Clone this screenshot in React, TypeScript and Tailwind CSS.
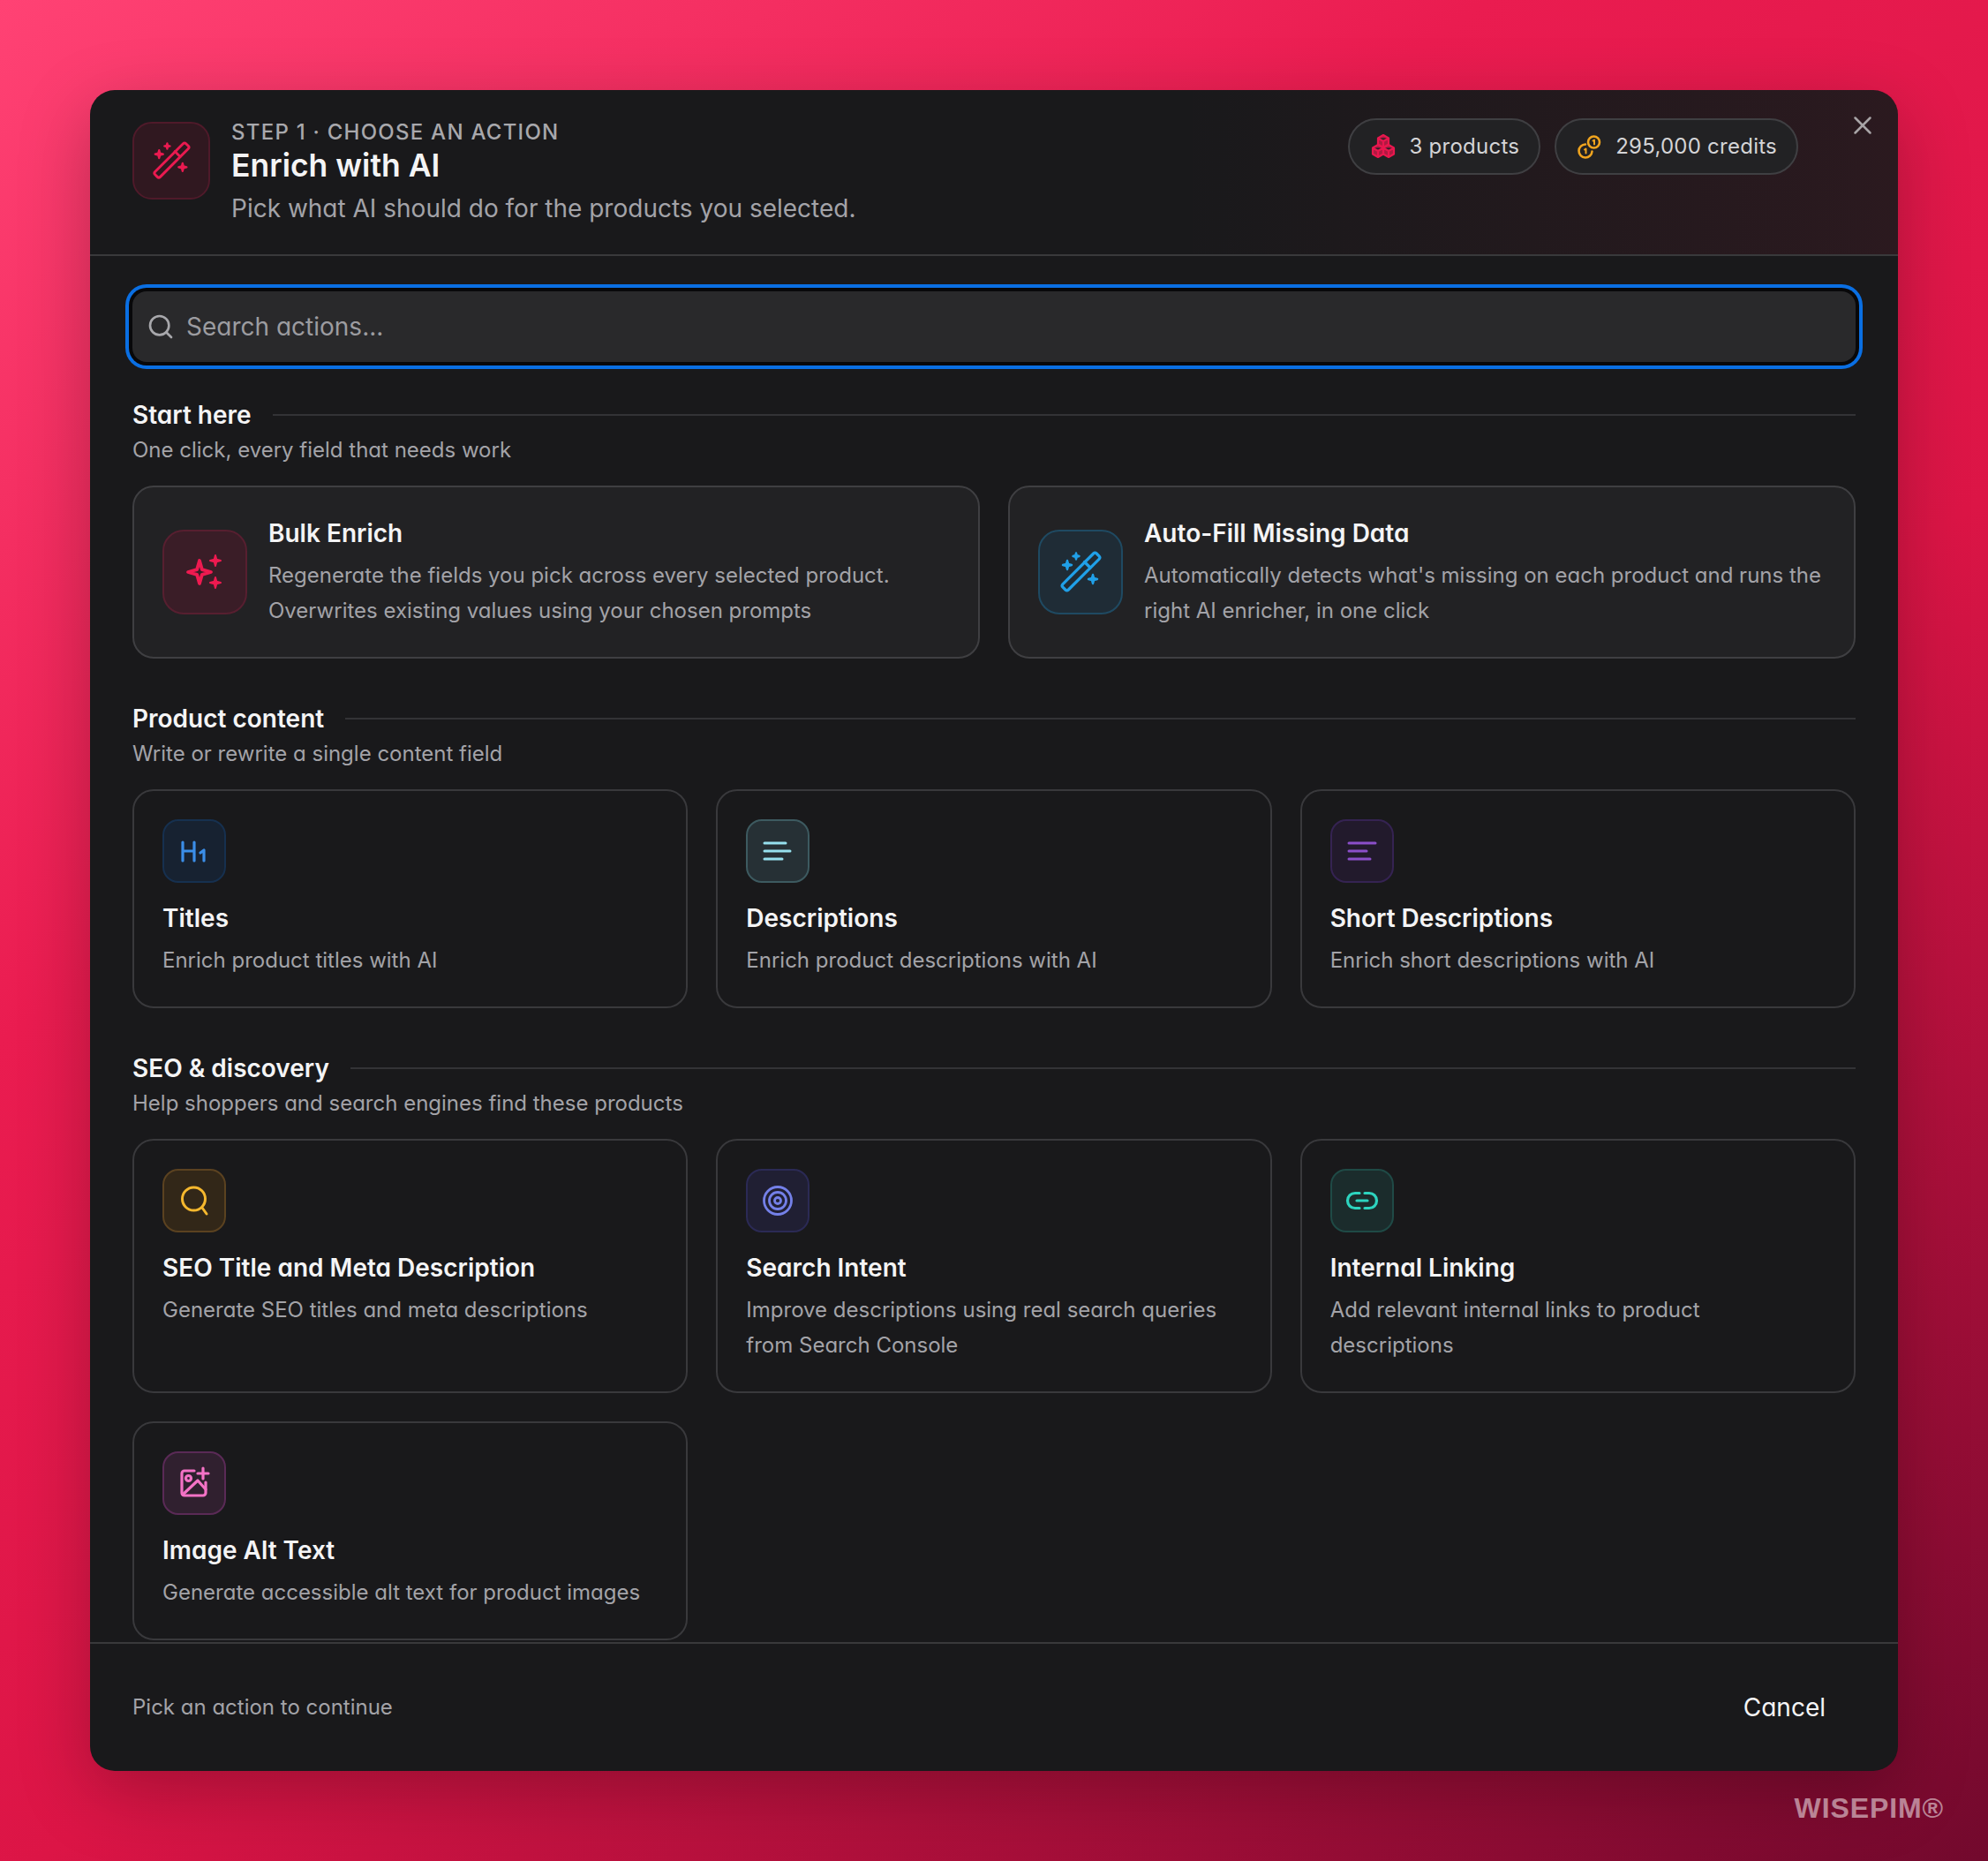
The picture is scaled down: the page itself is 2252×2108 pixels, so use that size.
import { Search, X } from "lucide-react";
import type { ReactNode } from "react";

function Svg({ size = 48, view = 48, className = "", children }: { size?: number; view?: number; className?: string; children: ReactNode }) {
  return (
    <svg width={size} height={size} viewBox={`0 0 ${view} ${view}`} fill="none" stroke="currentColor" strokeLinecap="round" strokeLinejoin="round" className={className}>
      {children}
    </svg>
  );
}

// four point star, used by the wand and sparkle icons
function star(x: number, y: number, r: number) {
  const k = r * 0.22;
  return `M${x} ${y - r}L${x + k} ${y - k}L${x + r} ${y}L${x + k} ${y + k}L${x} ${y + r}L${x - k} ${y + k}L${x - r} ${y}L${x - k} ${y - k}Z`;
}

function WandIcon({ size = 48 }: { size?: number }) {
  return (
    <Svg size={size}>
      <g strokeWidth="3.2">
        <rect x="-4.5" y="-27" width="9" height="54" rx="2.5" transform="translate(24.5 23.5) rotate(45)" />
        <path d="M28.5 12.5l6.5 6.5" />
      </g>
      <g fill="currentColor" strokeWidth="2.4">
        <path d={star(9, 16, 5)} />
        <path d={star(19, 6, 3.5)} />
        <path d={star(38, 32, 5)} />
      </g>
    </Svg>
  );
}

function SparkleIcon() {
  return (
    <Svg>
      <path d={star(18, 24, 13)} strokeWidth="3.8" />
      <g fill="currentColor" strokeWidth="2">
        <path d={star(36, 11, 6)} />
        <path d={star(36, 36, 6)} />
      </g>
    </Svg>
  );
}

function H1Icon() {
  return (
    <Svg>
      <g strokeWidth="3.2">
        <path d="M11 14v21M24 14v21M11 24h13" />
        <path d="M31 26l4-3v12" />
      </g>
    </Svg>
  );
}

function LinesIcon({ lines }: { lines: number[] }) {
  return (
    <Svg>
      <g strokeWidth="3">
        {lines.map((end, i) => (
          <path key={i} d={`M9 ${15 + i * 9}H${end}`} />
        ))}
      </g>
    </Svg>
  );
}

function LensIcon() {
  return (
    <Svg>
      <g strokeWidth="3">
        <circle cx="23.5" cy="22" r="13" />
        <path d="M33 32l5 7" />
      </g>
    </Svg>
  );
}

function TargetIcon() {
  return (
    <Svg>
      <g strokeWidth="2.8">
        <circle cx="24" cy="24" r="15.5" />
        <circle cx="24" cy="24" r="9.5" />
        <circle cx="24" cy="24" r="3.5" />
      </g>
    </Svg>
  );
}

function LinkIcon() {
  return (
    <Svg>
      <g strokeWidth="3.2">
        <path d="M21 15.5h-5a8.5 8.5 0 0 0 0 17h5" />
        <path d="M27 15.5h5a8.5 8.5 0 0 1 0 17h-5" />
        <path d="M18 24h12" />
      </g>
    </Svg>
  );
}

function ImageAddIcon() {
  return (
    <Svg>
      <g strokeWidth="3.2">
        <path d="M24 10H13a3 3 0 0 0-3 3v22a3 3 0 0 0 3 3h21a3 3 0 0 0 3-3V23" />
        <circle cx="17.5" cy="18.5" r="3" />
        <path d="M11 37l17-16 9 10" />
        <path d="M34 7v12M28 13h12" />
      </g>
    </Svg>
  );
}

function CubesIcon() {
  const cube = (x: number, y: number) =>
    `M${x} ${y - 7}l6 3.5v7l-6 3.5l-6-3.5v-7ZM${x - 6} ${y - 3.5}l6 3.5l6-3.5M${x} ${y}v7`;
  return (
    <Svg size={28} view={28} className="shrink-0">
      <g strokeWidth="2.2" fill="currentColor" fillOpacity="0.7">
        <path d={cube(14, 8)} />
        <path d={cube(8, 19)} />
        <path d={cube(20, 19)} />
      </g>
    </Svg>
  );
}

function CoinsIcon() {
  return (
    <Svg size={28} view={28} className="shrink-0">
      <g strokeWidth="2.6">
        <circle cx="18.5" cy="9" r="6.5" />
        <path d="M9 11.5a7.5 7.5 0 1 0 7.5 8" />
        <path d="M17.5 7.5l1.5-1v5" strokeWidth="2" />
        <path d="M8 17.5l1.5-1v5" strokeWidth="2" />
      </g>
    </Svg>
  );
}

function IconBox({ className, children }: { className: string; children: ReactNode }) {
  return <div className={`flex shrink-0 items-center justify-center border-2 ${className}`}>{children}</div>;
}

function SectionHead({ title, sub }: { title: string; sub: string }) {
  return (
    <>
      <div className="flex items-center gap-[24px]">
        <h3 className="text-[28px] leading-[40px] font-semibold whitespace-nowrap text-[#f4f4f5]">{title}</h3>
        <div className="h-[2px] flex-1 bg-[#333336]" />
      </div>
      <p className="text-[24px] leading-[40px] text-[#a3a3a8]">{sub}</p>
    </>
  );
}

function WideCard({ icon, box, title, desc }: { icon: ReactNode; box: string; title: string; desc: string[] }) {
  return (
    <div className="flex items-center gap-[24px] rounded-[24px] border-2 border-[#3f3f42] bg-[#222224] p-[32px]">
      <IconBox className={`h-[96px] w-[96px] rounded-[24px] ${box}`}>{icon}</IconBox>
      <div>
        <div className="text-[28px] leading-[40px] font-semibold text-[#f4f4f5]">{title}</div>
        <div className="mt-[8px] text-[24px] leading-[40px] text-[#a3a3a8]">
          {desc.map((line) => (
            <div key={line} className="whitespace-nowrap">{line}</div>
          ))}
        </div>
      </div>
    </div>
  );
}

function ActionCard({ icon, box, title, desc }: { icon: ReactNode; box: string; title: string; desc: string[] }) {
  return (
    <div className="rounded-[24px] border-2 border-[#39393c] bg-[#19191b] p-[32px]">
      <IconBox className={`h-[72px] w-[72px] rounded-[18px] ${box}`}>{icon}</IconBox>
      <div className="mt-[20px] text-[28px] leading-[40px] font-semibold text-[#f4f4f5]">{title}</div>
      <div className="mt-[8px] text-[24px] leading-[40px] text-[#a3a3a8]">
        {desc.map((line) => (
          <div key={line} className="whitespace-nowrap">{line}</div>
        ))}
      </div>
    </div>
  );
}

export default function App() {
  return (
    <div className="relative h-[2108px] w-[2252px] overflow-hidden bg-[linear-gradient(145deg,#ff4274_0%,#ea1c50_32%,#dc1546_58%,#72092d_100%)] p-[102px] font-['Inter','Noto_Sans',sans-serif] [font-feature-settings:'cv11']">
      <div className="relative flex h-[1904px] flex-col overflow-hidden rounded-[28px] bg-[#19191b] shadow-[0_24px_80px_rgba(0,0,0,0.25)]">
        <button className="absolute top-[23px] right-[23px] text-[#a8a4a6]">
          <X size={34} strokeWidth={1.8} />
        </button>

        <header className="flex h-[188px] shrink-0 items-start justify-between border-b-2 border-[#39393b] bg-[linear-gradient(90deg,transparent_60%,rgba(225,29,72,0.09))] pt-[32px] pr-[113px] pl-[48px]">
          <div className="flex gap-[24px]">
            <IconBox className="mt-[4px] h-[88px] w-[88px] rounded-[22px] border-[#4f1a2a] bg-[#301820] text-[#ea1a50]">
              <WandIcon size={44} />
            </IconBox>
            <div>
              <div className="text-[24px] leading-[32px] font-medium tracking-[1.25px] text-[#a8a8ac]">STEP 1 · CHOOSE AN ACTION</div>
              <h2 className="text-[35.5px] leading-[44px] font-semibold text-[#f4f4f5]">Enrich with AI</h2>
              <p className="mt-[4px] text-[28px] leading-[44px] text-[#a3a3a8]">Pick what AI should do for the products you selected.</p>
            </div>
          </div>
          <div className="flex gap-[16px]">
            <div className="flex h-[64px] items-center gap-[15px] rounded-full border-2 border-[#3f3f42] bg-[#222224] pr-[22px] pl-[24px] text-[24px] tracking-[0.25px] text-[#d4d4d6]">
              <span className="text-[#e8174e]"><CubesIcon /></span>
              3 products
            </div>
            <div className="flex h-[64px] items-center gap-[15px] rounded-full border-2 border-[#3f3f42] bg-[#222224] pr-[22px] pl-[24px] text-[24px] tracking-[0.25px] text-[#d4d4d6]">
              <span className="text-[#f0a41e]"><CoinsIcon /></span>
              295,000 credits
            </div>
          </div>
        </header>

        <main className="min-h-0 flex-1 overflow-hidden px-[48px] pt-[40px]">
          <div className="flex h-[80px] items-center gap-[13px] rounded-[16px] bg-[#29292b] pl-[16px] shadow-[0_0_0_4px_#08080a,0_0_0_8px_#0a6fe3]">
            <Search size={32} strokeWidth={2} className="shrink-0 text-[#a8a8ac]" />
            <input
              placeholder="Search actions..."
              className="flex-1 bg-transparent text-[28px] text-[#f4f4f5] outline-none placeholder:text-[#9c9ca0]"
            />
          </div>

          <section className="mt-[40px]">
            <SectionHead title="Start here" sub="One click, every field that needs work" />
            <div className="mt-[20px] grid grid-cols-2 gap-[32px]">
              <WideCard
                icon={<SparkleIcon />}
                box="border-[#571f30] bg-[#3a1d27] text-[#ee1a50]"
                title="Bulk Enrich"
                desc={["Regenerate the fields you pick across every selected product.", "Overwrites existing values using your chosen prompts"]}
              />
              <WideCard
                icon={<WandIcon />}
                box="border-[#1f4a62] bg-[#1f2c36] text-[#20a0e8]"
                title="Auto-Fill Missing Data"
                desc={["Automatically detects what's missing on each product and runs the", "right AI enricher, in one click"]}
              />
            </div>
          </section>

          <section className="mt-[48px]">
            <SectionHead title="Product content" sub="Write or rewrite a single content field" />
            <div className="mt-[20px] grid grid-cols-3 gap-[32px]">
              <ActionCard icon={<H1Icon />} box="border-[#16304f] bg-[#172231] text-[#3b8ee8]" title="Titles" desc={["Enrich product titles with AI"]} />
              <ActionCard icon={<LinesIcon lines={[33, 38, 29]} />} box="border-[#3d5a60] bg-[#263035] text-[#96e0ee]" title="Descriptions" desc={["Enrich product descriptions with AI"]} />
              <ActionCard icon={<LinesIcon lines={[39, 29, 33]} />} box="border-[#352352] bg-[#221a2c] text-[#8b4fc9]" title="Short Descriptions" desc={["Enrich short descriptions with AI"]} />
            </div>
          </section>

          <section className="mt-[48px]">
            <SectionHead title="SEO & discovery" sub="Help shoppers and search engines find these products" />
            <div className="mt-[20px] grid grid-cols-3 gap-[32px]">
              <ActionCard icon={<LensIcon />} box="border-[#5b4220] bg-[#322718] text-[#f5b82e]" title="SEO Title and Meta Description" desc={["Generate SEO titles and meta descriptions"]} />
              <ActionCard icon={<TargetIcon />} box="border-[#2b2a55] bg-[#201f33] text-[#7480e8]" title="Search Intent" desc={["Improve descriptions using real search queries", "from Search Console"]} />
              <ActionCard icon={<LinkIcon />} box="border-[#1f4a46] bg-[#1b2c2c] text-[#2dd4bf]" title="Internal Linking" desc={["Add relevant internal links to product", "descriptions"]} />
              <ActionCard icon={<ImageAddIcon />} box="border-[#5a2a56] bg-[#30202f] text-[#f472c6]" title="Image Alt Text" desc={["Generate accessible alt text for product images"]} />
            </div>
          </section>
        </main>

        <footer className="flex h-[146px] shrink-0 items-center justify-between border-t-2 border-[#39393b] px-[48px]">
          <span className="text-[24px] text-[#a3a3a8]">Pick an action to continue</span>
          <button className="px-[34px] text-[28px] text-[#f4f4f5]">Cancel</button>
        </footer>
      </div>

      <div className="absolute top-[2030px] right-[50px] font-['Liberation_Sans',sans-serif] text-[32px] leading-[36px] font-bold tracking-[0.9px] text-white/50">
        WISEPIM®
      </div>
    </div>
  );
}
